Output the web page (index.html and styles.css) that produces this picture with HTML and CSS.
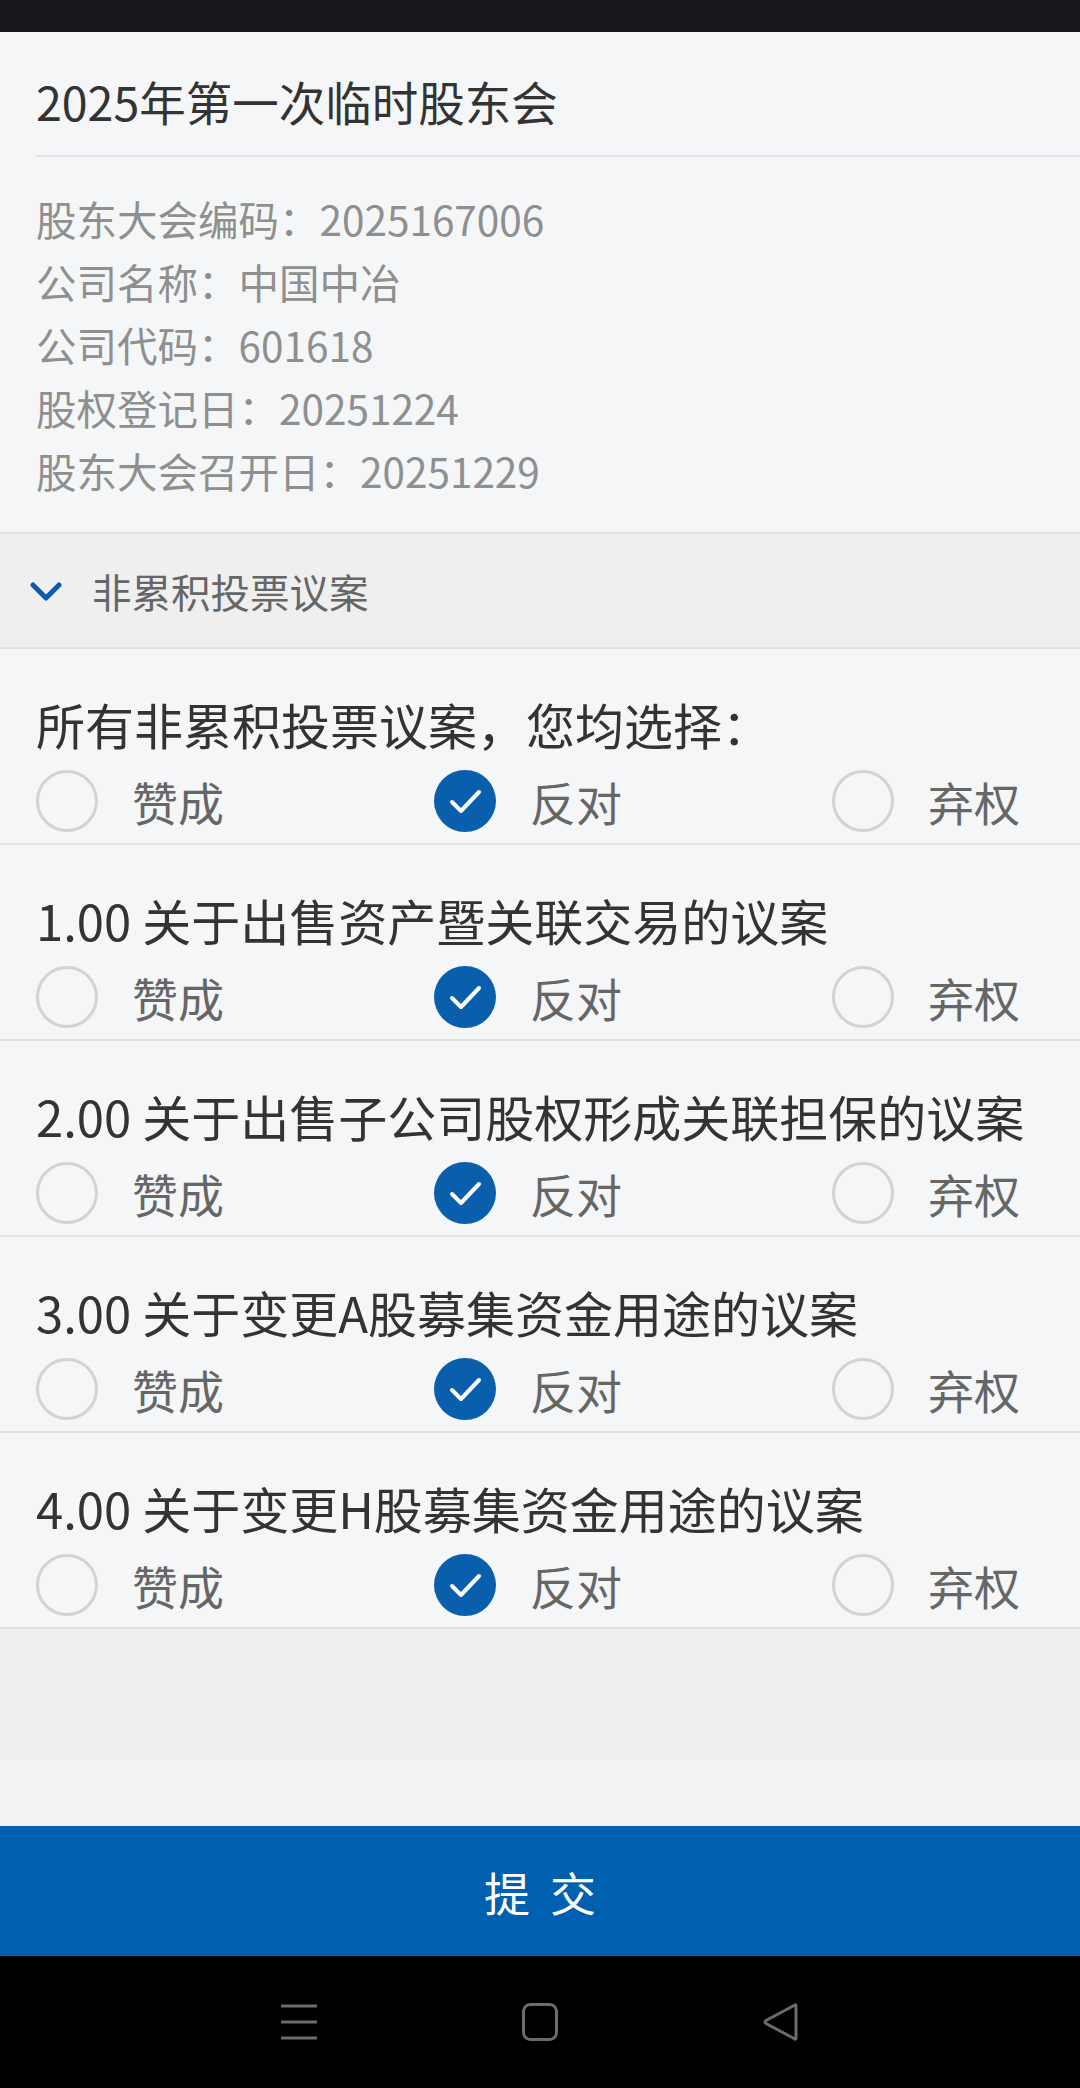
FILE: index.html
```html
<!DOCTYPE html>
<html lang="zh-CN">
<head>
<meta charset="utf-8">
<title>2025年第一次临时股东会</title>
<link rel="stylesheet" href="styles.css">
</head>
<body>
<div class="app">
  <div class="statusbar"></div>
  <main class="content">
    <section class="meeting">
      <h1 class="title">2025年第一次临时股东会</h1>
      <div class="info">
        <p>股东大会编码：2025167006</p>
        <p>公司名称：中国中冶</p>
        <p>公司代码：601618</p>
        <p>股权登记日：20251224</p>
        <p>股东大会召开日：20251229</p>
      </div>
    </section>
    <div class="section-head">
      <svg class="chevron" width="32" height="22" viewBox="0 0 32 22"><path d="M3 4 L16 17 L29 4" fill="none" stroke="#0a5cab" stroke-width="5" stroke-linecap="round" stroke-linejoin="round"/></svg>
      <span>非累积投票议案</span>
    </div>
    <div class="row">
      <div class="question">所有非累积投票议案，您均选择：</div>
      <div class="options">
        <div class="opt"><span class="radio"></span><span class="label">赞成</span></div>
        <div class="opt"><span class="radio checked"><svg width="62" height="62" viewBox="0 0 62 62"><path d="M18 32 L27 41 L45 22" fill="none" stroke="#fff" stroke-width="4" stroke-linecap="round" stroke-linejoin="round"/></svg></span><span class="label">反对</span></div>
        <div class="opt"><span class="radio"></span><span class="label">弃权</span></div>
      </div>
    </div>
    <div class="row">
      <div class="question">1.00 关于出售资产暨关联交易的议案</div>
      <div class="options">
        <div class="opt"><span class="radio"></span><span class="label">赞成</span></div>
        <div class="opt"><span class="radio checked"><svg width="62" height="62" viewBox="0 0 62 62"><path d="M18 32 L27 41 L45 22" fill="none" stroke="#fff" stroke-width="4" stroke-linecap="round" stroke-linejoin="round"/></svg></span><span class="label">反对</span></div>
        <div class="opt"><span class="radio"></span><span class="label">弃权</span></div>
      </div>
    </div>
    <div class="row">
      <div class="question">2.00 关于出售子公司股权形成关联担保的议案</div>
      <div class="options">
        <div class="opt"><span class="radio"></span><span class="label">赞成</span></div>
        <div class="opt"><span class="radio checked"><svg width="62" height="62" viewBox="0 0 62 62"><path d="M18 32 L27 41 L45 22" fill="none" stroke="#fff" stroke-width="4" stroke-linecap="round" stroke-linejoin="round"/></svg></span><span class="label">反对</span></div>
        <div class="opt"><span class="radio"></span><span class="label">弃权</span></div>
      </div>
    </div>
    <div class="row">
      <div class="question">3.00 关于变更A股募集资金用途的议案</div>
      <div class="options">
        <div class="opt"><span class="radio"></span><span class="label">赞成</span></div>
        <div class="opt"><span class="radio checked"><svg width="62" height="62" viewBox="0 0 62 62"><path d="M18 32 L27 41 L45 22" fill="none" stroke="#fff" stroke-width="4" stroke-linecap="round" stroke-linejoin="round"/></svg></span><span class="label">反对</span></div>
        <div class="opt"><span class="radio"></span><span class="label">弃权</span></div>
      </div>
    </div>
    <div class="row">
      <div class="question">4.00 关于变更H股募集资金用途的议案</div>
      <div class="options">
        <div class="opt"><span class="radio"></span><span class="label">赞成</span></div>
        <div class="opt"><span class="radio checked"><svg width="62" height="62" viewBox="0 0 62 62"><path d="M18 32 L27 41 L45 22" fill="none" stroke="#fff" stroke-width="4" stroke-linecap="round" stroke-linejoin="round"/></svg></span><span class="label">反对</span></div>
        <div class="opt"><span class="radio"></span><span class="label">弃权</span></div>
      </div>
    </div>
    <div class="filler">
      <div class="filler-a"></div>
      <div class="filler-b"></div>
    </div>
  </main>
  <button class="submit">提交</button>
  <nav class="navbar">
    <svg width="38" height="38" viewBox="0 0 38 38"><path d="M1 3 H37 M1 19 H37 M1 35 H37" stroke="#6b6b6b" stroke-width="3"/></svg>
    <svg width="38" height="38" viewBox="0 0 38 38"><rect x="2.5" y="1.5" width="33" height="35" rx="7" fill="none" stroke="#6b6b6b" stroke-width="3"/></svg>
    <svg width="38" height="38" viewBox="0 0 38 38"><path d="M34 3 L34 35 Q34 37 32 35.5 L4 20.5 Q2 19 4 17.5 L32 2.5 Q34 1 34 3 Z" fill="none" stroke="#6b6b6b" stroke-width="3" stroke-linejoin="round"/></svg>
  </nav>
</div>
</body>
</html>
```
FILE: styles.css
```css
* { box-sizing: border-box; }
html, body { margin: 0; padding: 0; }
body {
  width: 1080px;
  height: 2088px;
  font-family: "Noto Sans CJK SC", "Noto Sans", sans-serif;
  background: #f5f6f8;
}
.app {
  display: flex;
  flex-direction: column;
  height: 2088px;
}
.statusbar {
  height: 32px;
  background: #17181b;
  flex: none;
}
.content {
  flex: 1;
  display: flex;
  flex-direction: column;
  background: #f5f6f8;
}
.meeting {
  padding-left: 36px;
}
.title {
  margin: 0;
  padding: 42px 0 28px;
  font-size: 46.5px;
  line-height: 53px;
  font-weight: 400;
  color: #333;
  border-bottom: 2px solid #e2e4e7;
}
.info {
  padding: 30px 0 30px;
}
.info p {
  margin: 0;
  font-size: 40.5px;
  line-height: 63px;
  color: #8f8f8f;
}
.section-head {
  height: 117px;
  display: flex;
  align-items: center;
  padding-left: 30px;
  gap: 30px;
  background: #efefef;
  border-top: 2px solid #e2e2e2;
  border-bottom: 2px solid #e2e2e2;
  font-size: 39.5px;
  color: #666;
}
.chevron { flex: none; margin-top: 2px; }
.row {
  padding: 47px 60px 10px 36px;
  border-bottom: 2px solid #e2e2e2;
  background: #f5f6f8;
}
.question {
  font-size: 49px;
  line-height: 56px;
  color: #333;
  white-space: nowrap;
}
.options {
  margin-top: 17px;
  display: flex;
  justify-content: space-between;
  align-items: center;
  height: 64px;
}
.opt {
  display: flex;
  align-items: center;
  gap: 34px;
}
.radio {
  width: 62px;
  height: 62px;
  border-radius: 50%;
  border: 3px solid #d3d3d3;
  display: block;
  flex: none;
}
.radio.checked {
  border: none;
  background: #0a5fad;
}
.radio svg { display: block; }
.label {
  font-size: 46px;
  line-height: 56px;
  color: #666;
}
.filler {
  flex: 1;
  display: flex;
  flex-direction: column;
}
.filler-a { height: 131px; background: #efefef; }
.filler-b { flex: 1; background: #f2f2f2; }
.submit {
  flex: none;
  height: 130px;
  border: none;
  margin: 0;
  background: #0060b0;
  color: #fff;
  font-family: "Noto Sans CJK SC", "Noto Sans", sans-serif;
  font-size: 46px;
  letter-spacing: 20px;
  padding: 0 0 0 20px;
  display: flex;
  align-items: center;
  justify-content: center;
  width: 100%;
}
.navbar {
  flex: none;
  height: 132px;
  background: #000;
  display: flex;
  align-items: center;
  justify-content: center;
  gap: 203px;
}
```
